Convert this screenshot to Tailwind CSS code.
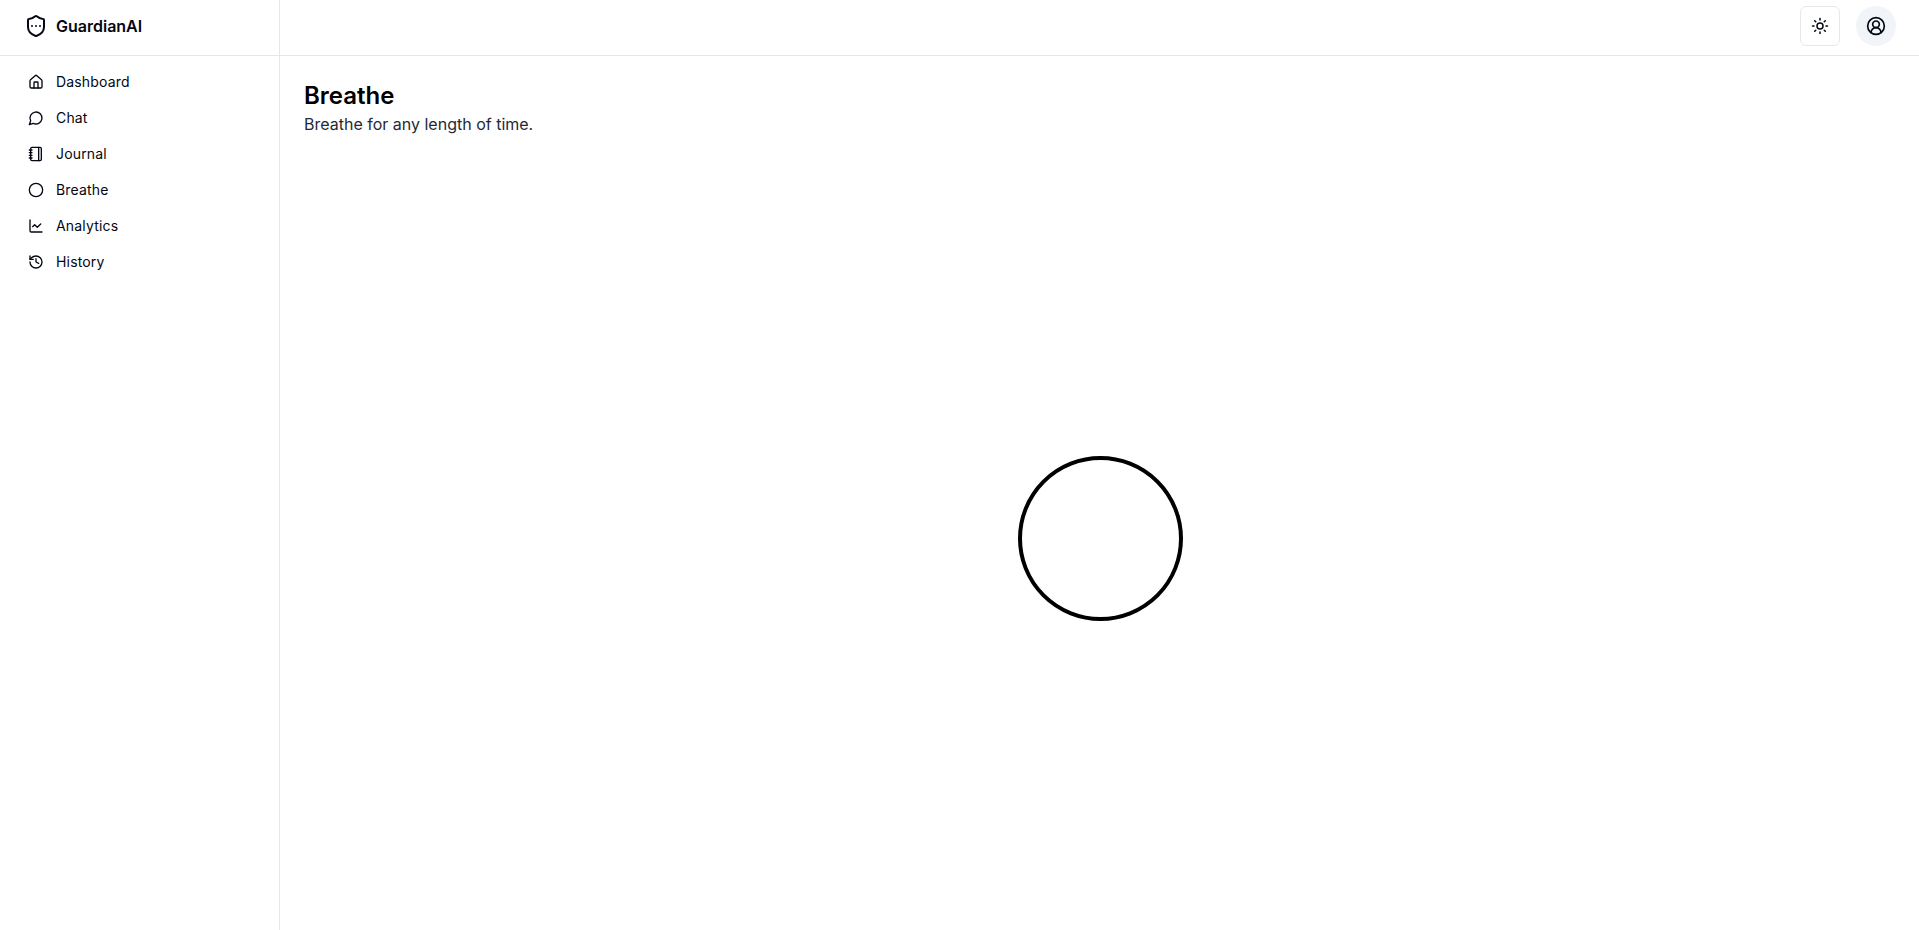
<!DOCTYPE html>
<html lang="en">
<head>
	<meta charset="UTF-8">
	<title>GuardianAI</title>
	<script src="https://cdn.jsdelivr.net/npm/@tailwindcss/browser@4"></script>
</head>
<body class="font-['Inter',sans-serif] bg-white text-[#030712]">
	<div class="flex h-[930px] overflow-hidden">
		<aside class="w-[280px] shrink-0 border-r border-[#e5e7eb]">
			<div class="h-14 flex items-center gap-2 px-6 pb-[3px] border-b border-[#e5e7eb]">
				<svg class="w-6 h-6 shrink-0" viewBox="0 0 24 24" fill="none" stroke="currentColor" stroke-width="2" stroke-linecap="round" stroke-linejoin="round">
					<path d="M20 13c0 5-3.5 7.5-7.66 8.95a1 1 0 0 1-.67-.01C7.5 20.5 4 18 4 13V6a1 1 0 0 1 1-1c2 0 4.5-1.2 6.24-2.72a1.17 1.17 0 0 1 1.52 0C14.51 3.81 17 5 19 5a1 1 0 0 1 1 1z"/>
					<path d="M8 12h.01"/><path d="M12 12h.01"/><path d="M16 12h.01"/>
				</svg>
				<span class="font-semibold text-base">GuardianAI</span>
			</div>
			<nav class="px-4 pt-2 text-sm font-normal tracking-[0.012em]">
				<a class="h-9 flex items-center gap-3 px-3">
					<svg class="w-4 h-4 shrink-0" viewBox="0 0 24 24" fill="none" stroke="currentColor" stroke-width="2" stroke-linecap="round" stroke-linejoin="round"><path d="M15 21v-8a1 1 0 0 0-1-1h-4a1 1 0 0 0-1 1v8"/><path d="M3 10a2 2 0 0 1 .709-1.528l7-5.999a2 2 0 0 1 2.582 0l7 5.999A2 2 0 0 1 21 10v9a2 2 0 0 1-2 2H5a2 2 0 0 1-2-2z"/></svg>
					Dashboard
				</a>
				<a class="h-9 flex items-center gap-3 px-3">
					<svg class="w-4 h-4 shrink-0" viewBox="0 0 24 24" fill="none" stroke="currentColor" stroke-width="2" stroke-linecap="round" stroke-linejoin="round"><path d="M7.9 20A9 9 0 1 0 4 16.1L2 22Z"/></svg>
					Chat
				</a>
				<a class="h-9 flex items-center gap-3 px-3">
					<svg class="w-4 h-4 shrink-0" viewBox="0 0 24 24" fill="none" stroke="currentColor" stroke-width="2" stroke-linecap="round" stroke-linejoin="round"><path d="M2 6h4"/><path d="M2 10h4"/><path d="M2 14h4"/><path d="M2 18h4"/><rect width="16" height="20" x="4" y="2" rx="2"/><path d="M16 2v20"/></svg>
					Journal
				</a>
				<a class="h-9 flex items-center gap-3 px-3">
					<svg class="w-4 h-4 shrink-0" viewBox="0 0 24 24" fill="none" stroke="currentColor" stroke-width="2" stroke-linecap="round" stroke-linejoin="round"><circle cx="12" cy="12" r="10"/></svg>
					Breathe
				</a>
				<a class="h-9 flex items-center gap-3 px-3">
					<svg class="w-4 h-4 shrink-0" viewBox="0 0 24 24" fill="none" stroke="currentColor" stroke-width="2" stroke-linecap="round" stroke-linejoin="round"><path d="M3 3v16a2 2 0 0 0 2 2h16"/><path d="m19 9-5 5-4-4-3 3"/></svg>
					Analytics
				</a>
				<a class="h-9 flex items-center gap-3 px-3">
					<svg class="w-4 h-4 shrink-0" viewBox="0 0 24 24" fill="none" stroke="currentColor" stroke-width="2" stroke-linecap="round" stroke-linejoin="round"><path d="M3 12a9 9 0 1 0 9-9 9.75 9.75 0 0 0-6.74 2.74L3 8"/><path d="M3 3v5h5"/><path d="M12 7v5l4 2"/></svg>
					History
				</a>
			</nav>
		</aside>
		<div class="flex-1 flex flex-col">
			<header class="h-14 shrink-0 flex items-center justify-end gap-4 pl-6 pr-[23px] pb-[3px] border-b border-[#e5e7eb]">
				<button class="w-10 h-10 flex items-center justify-center rounded-md border border-[#e5e7eb] bg-white">
					<svg class="w-[18px] h-[18px]" viewBox="0 0 24 24" fill="none" stroke="currentColor" stroke-width="2" stroke-linecap="round" stroke-linejoin="round"><circle cx="12" cy="12" r="4"/><path d="M12 2v2"/><path d="M12 20v2"/><path d="m4.93 4.93 1.41 1.41"/><path d="m17.66 17.66 1.41 1.41"/><path d="M2 12h2"/><path d="M20 12h2"/><path d="m6.34 17.66-1.41 1.41"/><path d="m19.07 4.93-1.41 1.41"/></svg>
				</button>
				<button class="w-10 h-10 flex items-center justify-center rounded-full bg-[#f1f5f9]">
					<svg class="w-5 h-5" viewBox="0 0 24 24" fill="none" stroke="currentColor" stroke-width="2" stroke-linecap="round" stroke-linejoin="round"><path d="M18 20a6 6 0 0 0-12 0"/><circle cx="12" cy="10" r="4"/><circle cx="12" cy="12" r="10"/></svg>
				</button>
			</header>
			<main class="flex-1 flex flex-col pt-6 px-6">
				<h1 class="text-2xl font-semibold leading-8 text-black">Breathe</h1>
				<p class="text-base leading-6 text-[#1f2937]">Breathe for any length of time.</p>
				<div class="flex-1 flex items-center justify-center pt-[11px] pl-[2px]">
					<div class="w-[165px] h-[165px] rounded-full border-4 border-black"></div>
				</div>
			</main>
		</div>
	</div>
</body>
</html>
